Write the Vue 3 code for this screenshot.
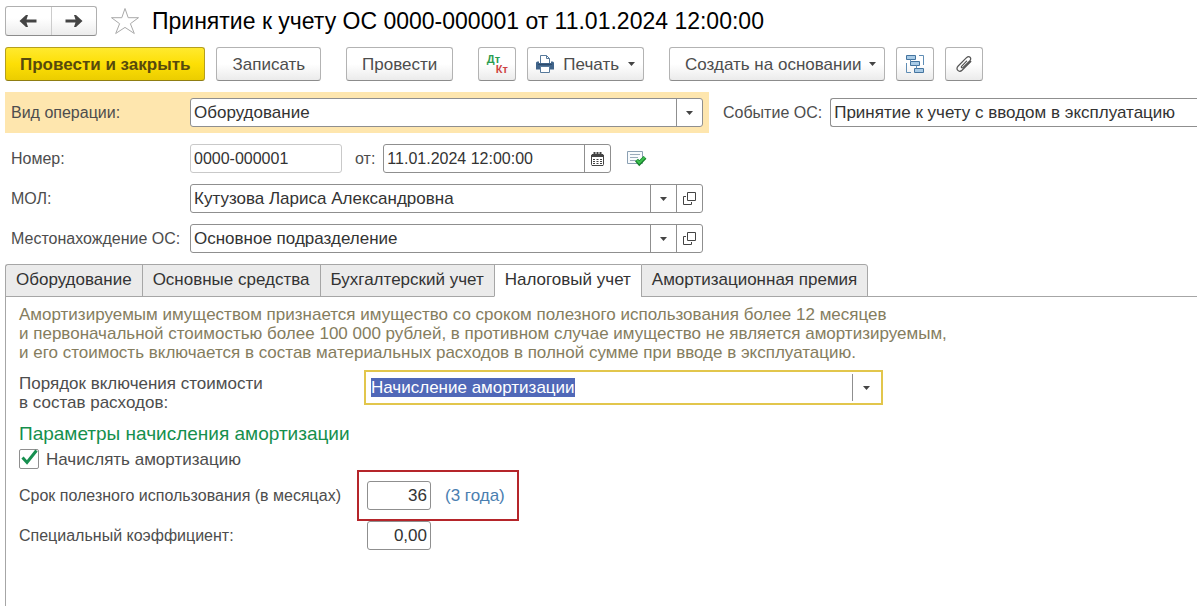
<script setup>
import { ref, onMounted } from 'vue'

const tabs = [
  'Оборудование',
  'Основные средства',
  'Бухгалтерский учет',
  'Налоговый учет',
  'Амортизационная премия',
]
const activeTab = ref('Налоговый учет')
const references = [
  { id: 'person', label: 'МОЛ:', value: 'Кутузова Лариса Александровна' },
  { id: 'place', label: 'Местонахождение ОС:', value: 'Основное подразделение' },
]
const number = ref('0000-000001')
const date = ref('11.01.2024 12:00:00')
const event = ref('Принятие к учету с вводом в эксплуатацию')
const costMode = ref('Начисление амортизации')
const accrue = ref(true)
const months = ref('36')
const factor = ref('0,00')
const costInput = ref(null)

onMounted(() => {
  costInput.value.focus()
  costInput.value.select()
})
</script>

<template>
  <main class="page">
    <header class="head">
      <div class="nav">
        <button type="button" aria-label="Назад">
          <svg width="18" height="14" viewBox="0 0 18 14"><path d="M.5 7 7 1H9L7.500 5.500H17.500V8.500H7.500L9 13H7Z" fill="#444" /></svg>
        </button>
        <button type="button" aria-label="Вперед">
          <svg width="18" height="14" viewBox="0 0 18 14"><path d="M17.500 7 11 1H9L10.500 5.500H.5V8.500H10.500L9 13H11Z" fill="#444" /></svg>
        </button>
      </div>
      <button type="button" class="star" aria-label="В избранное">
        <svg width="30" height="28" viewBox="0 0 30 28"><path d="M15 1.500 18.200 10.700H28.500L20.400 16.700 24.300 26.500 15 20.400 5.700 26.500 9.600 16.700 1.500 10.700H11.800Z" fill="#fff" stroke="#a9a9a9" stroke-width="1" /></svg>
      </button>
      <h1>Принятие к учету ОС 0000-000001 от 11.01.2024 12:00:00</h1>
    </header>

    <div class="toolbar">
      <div class="group">
        <button type="button" class="btn primary">Провести и закрыть</button>
        <button type="button" class="btn">Записать</button>
      </div>
      <button type="button" class="btn">Провести</button>
      <div class="group">
        <button type="button" class="btn icon" aria-label="Проводки">
          <span class="dtkt"><span class="dt">Дт</span><span class="kt">Кт</span></span>
        </button>
        <button type="button" class="btn print">
          <svg width="18" height="18" viewBox="0 0 18 18">
            <path d="M4.500 8V.5H10.500L13.500 3.500V8" fill="#fff" stroke="#56799b" />
            <path d="M10.500.5V3.500H13.500" fill="none" stroke="#56799b" />
            <path d="M0 8Q0 6.500 1.500 6.500H3V8H15V6.500H16.500Q18 6.500 18 8V14.500H0Z" fill="#3f6389" />
            <path d="M2 9.500H16" stroke="#2d4b6c" />
            <path d="M4.500 11.500H13.500V17.500H4.500Z" fill="#fff" stroke="#56799b" />
          </svg>
          Печать
          <svg width="7" height="4" viewBox="0 0 7 4"><path d="M0 0H7L3.500 4Z" fill="#444" /></svg>
        </button>
      </div>
      <div class="group">
        <button type="button" class="btn create">
          Создать на основании
          <svg width="7" height="4" viewBox="0 0 7 4"><path d="M0 0H7L3.500 4Z" fill="#444" /></svg>
        </button>
        <button type="button" class="btn icon" aria-label="Структура подчиненности">
          <svg width="20" height="20" viewBox="0 0 20 20">
            <g fill="#a9cbe6" stroke="#44749f">
              <path d="M1.500 1.500H10.500V5.500H1.500ZM5.500 7.500H14.500V11.500H5.500ZM9.500 14.500H18.500V18.500H9.500Z" />
            </g>
            <path d="M14 1.500H18.500V11M1.500 9V18.500H6M5.500 5.500V7.500M11.500 11.500V14.500" fill="none" stroke="#5f8db5" />
          </svg>
        </button>
        <button type="button" class="btn icon" aria-label="Файлы">
          <svg width="18" height="18" viewBox="0 0 18 18"><path d="M11.600 6.200 6.800 11.100C5.700 12.300 6.900 13.500 8.100 12.400L14.700 5.800C17.200 3 14.200.2 11.500 2.700L3.200 11C.2 14.300 3.900 18.200 7.300 15L15.800 6.500" fill="none" stroke="#555" stroke-width="1.200" stroke-linecap="round" /></svg>
        </button>
      </div>
    </div>

    <div class="top">
      <div class="row operation">
        <label for="operation">Вид операции:</label>
        <div class="field">
          <select id="operation"><option>Оборудование</option></select>
          <span class="cell drop"><svg width="7" height="4" viewBox="0 0 7 4"><path d="M0 0H7L3.500 4Z" fill="#444" /></svg></span>
        </div>
      </div>
      <div class="event">
        <label for="event">Событие ОС:</label>
        <input id="event" v-model="event" type="text" />
      </div>
    </div>

    <div class="row">
      <label for="number">Номер:</label>
      <div class="numbers">
        <input id="number" v-model="number" class="number" type="text" readonly />
        <label for="date">от:</label>
        <div class="field date">
          <input id="date" v-model="date" type="text" />
          <button type="button" class="cell" aria-label="Календарь">
            <svg width="13" height="14" viewBox="0 0 13 14">
              <path d="M1 2.500H12L12.500 3V12.500L12 13.500H1L.5 12.500V3Z" fill="#fff" stroke="#444" />
              <path d="M1 2H12V5H1Z" fill="#444" />
              <path d="M3.500 0V3M6.500 0V3M9.500 0V3" stroke="#444" stroke-width="2" />
              <path d="M2 7H4V8H2ZM5.500 7H7.500V8H5.500ZM9 7H11V8H9ZM2 9H4V10H2ZM5.500 9H7.500V10H5.500ZM9 9H11V10H9ZM2 11H4V12H2ZM5.500 11H7.500V12H5.500ZM9 11H11V12H9Z" fill="#444" />
            </svg>
          </button>
        </div>
        <svg class="posted" width="20" height="17" viewBox="0 0 20 17" role="img" aria-label="Проведен">
          <path d="M.5 1.500H15.500V13.500H.5Z" fill="#f8fbfd" stroke="#8ba0b3" />
          <path d="M3 4.500H13M3 7.500H11M3 10.500H9" stroke="#9aabba" />
          <path d="M9.500 10 12.300 13.200 18 7.300" fill="none" stroke="#16802a" stroke-width="4" />
          <path d="M9.900 10 12.300 12.800 17.700 7.200" fill="none" stroke="#3cc04f" stroke-width="2" />
        </svg>
      </div>
    </div>

    <div v-for="item in references" :key="item.id" class="row">
      <label :for="item.id">{{ item.label }}</label>
      <div class="field withopen">
        <select :id="item.id"><option>{{ item.value }}</option></select>
        <span class="cell drop"><svg width="7" height="4" viewBox="0 0 7 4"><path d="M0 0H7L3.500 4Z" fill="#444" /></svg></span>
        <button type="button" class="cell" aria-label="Открыть">
          <svg width="13" height="13" viewBox="0 0 13 13" fill="none" stroke="#444"><path d="M4.500.5H12.500V8.500H4.500ZM3 4.500H.5V12.500H8.500V10" /></svg>
        </button>
      </div>
    </div>

    <div class="tabs" role="tablist">
      <button
        v-for="tab in tabs"
        :key="tab"
        type="button"
        role="tab"
        class="tab"
        :class="{ active: tab === activeTab }"
        :aria-selected="tab === activeTab"
        @click="activeTab = tab"
      >{{ tab }}</button>
    </div>

    <section class="panel" role="tabpanel">
      <p class="hint">
        Амортизируемым имуществом признается имущество со сроком полезного использования более 12 месяцев<br />
        и первоначальной стоимостью более 100 000 рублей, в противном случае имущество не является амортизируемым,<br />
        и его стоимость включается в состав материальных расходов в полной сумме при вводе в эксплуатацию.
      </p>
      <div class="param cost">
        <label for="cost">Порядок включения стоимости<br />в состав расходов:</label>
        <div class="focus">
          <input id="cost" ref="costInput" v-model="costMode" type="text" />
          <button type="button" class="cell" aria-label="Выбрать">
            <svg width="7" height="4" viewBox="0 0 7 4"><path d="M0 0H7L3.500 4Z" fill="#444" /></svg>
          </button>
        </div>
      </div>
      <h2>Параметры начисления амортизации</h2>
      <label class="check">
        <input v-model="accrue" type="checkbox" />
        <svg v-if="accrue" width="20" height="22" viewBox="0 0 20 22"><path d="M3.500 9.500 8 14.500 17.500 2.500" fill="none" stroke="#178f50" stroke-width="3" /></svg>
        <span>Начислять амортизацию</span>
      </label>
      <div class="param">
        <label for="months">Срок полезного использования (в месяцах)</label>
        <div class="marked">
          <input id="months" v-model="months" class="num" type="text" />
          <span class="years">(3 года)</span>
        </div>
      </div>
      <div class="param">
        <label for="factor">Специальный коэффициент:</label>
        <input id="factor" v-model="factor" class="num last" type="text" />
      </div>
    </section>
  </main>
</template>

<style>
body {
  margin: 0;
  background: #fff;
}
</style>

<style scoped>
.page {
  box-sizing: border-box;
  min-height: 100vh;
  padding: 6px 0 0 5px;
  display: flex;
  flex-direction: column;
  gap: 11px;
  overflow: hidden;
  font: 17px/19px "Liberation Sans", Arial, sans-serif;
  color: #4d4d4d;
}
* {
  box-sizing: border-box;
}
button,
input,
select {
  margin: 0;
  font: inherit;
  color: #333;
  border-radius: 0;
  outline: none;
}
svg {
  display: block;
  flex: none;
}
.head {
  display: flex;
  align-items: center;
  height: 30px;
}
.nav {
  display: flex;
  width: 92px;
  height: 30px;
  border: 1px solid #b0b0b0;
  border-bottom-color: #8c8c8c;
  border-radius: 3px;
  background: linear-gradient(#fff 40%, #ececec);
}
.nav button {
  flex: 1;
  display: flex;
  align-items: center;
  justify-content: center;
  padding: 0;
  border: 0;
  background: none;
}
.nav button + button {
  border-left: 1px solid #ccc;
}
.star {
  margin: 0 12px 0 13px;
  padding: 0;
  border: 0;
  background: none;
}
h1 {
  margin: 0;
  font-size: 23px;
  line-height: 30px;
  font-weight: 400;
  color: #000;
  white-space: nowrap;
}
.toolbar {
  display: flex;
  gap: 25px;
  height: 34px;
}
.group {
  display: flex;
  gap: 11px;
}
.btn {
  display: flex;
  align-items: center;
  justify-content: center;
  height: 34px;
  padding: 0 15px;
  border: 1px solid #b3b3b3;
  border-bottom-color: #8c8c8c;
  border-radius: 3px;
  background: linear-gradient(#fff 50%, #ebebeb);
  color: #4d4d4d;
  white-space: nowrap;
}
.btn.primary {
  padding: 0 14px;
  border-color: #b59f1d;
  border-bottom-color: #8f7d12;
  background: linear-gradient(#ffe92e, #fddf05 50%, #ebcd00);
  color: #574a0c;
  font-weight: 700;
}
.btn.icon {
  width: 38px;
  padding: 0;
}
.btn.print {
  gap: 9px;
  padding: 0 8px;
}
.btn.create {
  gap: 8px;
  padding: 0 8px 0 15px;
}
.dtkt {
  display: grid;
  width: 21px;
  font-size: 11px;
  line-height: 10px;
  font-weight: 700;
}
.dt {
  color: #2b9c50;
  text-align: left;
}
.kt {
  color: #cf4545;
  text-align: right;
}
.top {
  display: flex;
  gap: 14px;
}
.row {
  display: grid;
  grid-template-columns: 179px minmax(0, 1fr);
  align-items: center;
  max-width: 704px;
  padding: 0 6px;
  white-space: nowrap;
}
.row label,
.event label,
.param label,
.numbers {
  font-size: 16px;
}
.operation {
  flex: 0 1 704px;
  height: 41px;
  background: #fee6ae;
}
.event {
  flex: 1;
  display: flex;
  align-items: center;
  gap: 8px;
  white-space: nowrap;
}
.event input {
  flex: 1;
  min-width: 0;
  height: 29px;
  padding: 0 3px;
  border: 1px solid #8f8f8f;
  border-right: 0;
  border-radius: 3px 0 0 3px;
}
.field {
  display: grid;
  grid-template-columns: minmax(0, 1fr) 26px;
  height: 29px;
  border: 1px solid #8f8f8f;
  border-radius: 3px;
  background: #fff;
}
.field.withopen {
  grid-template-columns: minmax(0, 1fr) 26px 26px;
}
.field select {
  grid-area: 1 / 1 / 2 / 3;
  appearance: none;
  padding: 0 29px 0 3px;
  border: 0;
  background: none;
}
.field input {
  min-width: 0;
  padding: 0 3px;
  border: 0;
  background: none;
}
.cell {
  display: flex;
  align-items: center;
  justify-content: center;
  padding: 0;
  border: 0;
  border-left: 1px solid #8f8f8f;
  background: none;
}
.drop {
  grid-area: 1 / 2;
  pointer-events: none;
}
.numbers {
  display: flex;
  align-items: center;
}
.numbers label {
  margin: 0 8px 0 13px;
}
.number {
  width: 152px;
  height: 29px;
  padding: 0 3px;
  border: 1px solid #c9c9c9;
  border-radius: 3px;
}
.date {
  width: 228px;
}
.posted {
  margin-left: 16px;
}
.tabs {
  display: flex;
  margin-right: auto;
  z-index: 1;
}
.tab {
  height: 33px;
  padding: 0 10px 2px;
  border: 1px solid #a6a6a6;
  border-right-width: 0;
  background: #ebebeb;
  white-space: nowrap;
}
.tab:first-child {
  border-radius: 3px 0 0 0;
}
.tab:last-child {
  border-right-width: 1px;
  border-radius: 0 3px 0 0;
}
.tab.active {
  background: #fff;
  border-bottom-color: #fff;
}
.panel {
  flex: 1;
  margin-top: -12px;
  padding: 8px 14px 20px 13px;
  border: 1px solid #a6a6a6;
  border-width: 1px 0 0 1px;
}
.hint {
  margin: 0;
  color: #857d5e;
  white-space: nowrap;
}
.param {
  display: grid;
  grid-template-columns: 338px minmax(0, 1fr);
  align-items: start;
  height: 40px;
  white-space: nowrap;
}
.param label {
  padding-top: 10px;
}
.param.cost {
  grid-template-columns: 345px minmax(0, 519px);
  height: 42px;
  margin-top: 8px;
}
.cost label {
  padding-top: 4px;
}
.focus {
  display: grid;
  grid-template-columns: minmax(0, 1fr) 27px;
  height: 35px;
  padding: 2px;
  border: 2px solid #e2c64c;
  background: #fff;
}
.focus input {
  padding: 0 3px;
  border: 0;
}
.focus input::selection {
  background: #5068b8;
  color: #fff;
}
h2 {
  margin: 10px 0 2px;
  font-size: 19px;
  line-height: 24px;
  font-weight: 400;
  color: #158f4d;
}
.check {
  display: grid;
  grid-template-columns: 20px auto;
  justify-content: start;
  align-items: center;
  column-gap: 7px;
  height: 22px;
  margin-bottom: 6px;
}
.check input {
  grid-area: 1 / 1;
  appearance: none;
  width: 20px;
  height: 20px;
  border: 1px solid #8f8f8f;
  border-radius: 2px;
  background: #fff;
}
.check svg {
  grid-area: 1 / 1;
  pointer-events: none;
}
.check span {
  grid-area: 1 / 2;
}
.marked {
  display: flex;
  align-items: center;
  gap: 14px;
  width: 162px;
  height: 51px;
  margin-top: -6px;
  padding: 0 8px;
  border: 2px solid #b5252a;
}
.num {
  width: 64px;
  height: 29px;
  padding: 0 3px;
  border: 1px solid #8f8f8f;
  border-radius: 3px;
  text-align: right;
}
.last {
  margin: 5px 0 0 10px;
}
.years {
  color: #4a7eb0;
}
.cost label {
  font-size: 17px;
}
</style>
